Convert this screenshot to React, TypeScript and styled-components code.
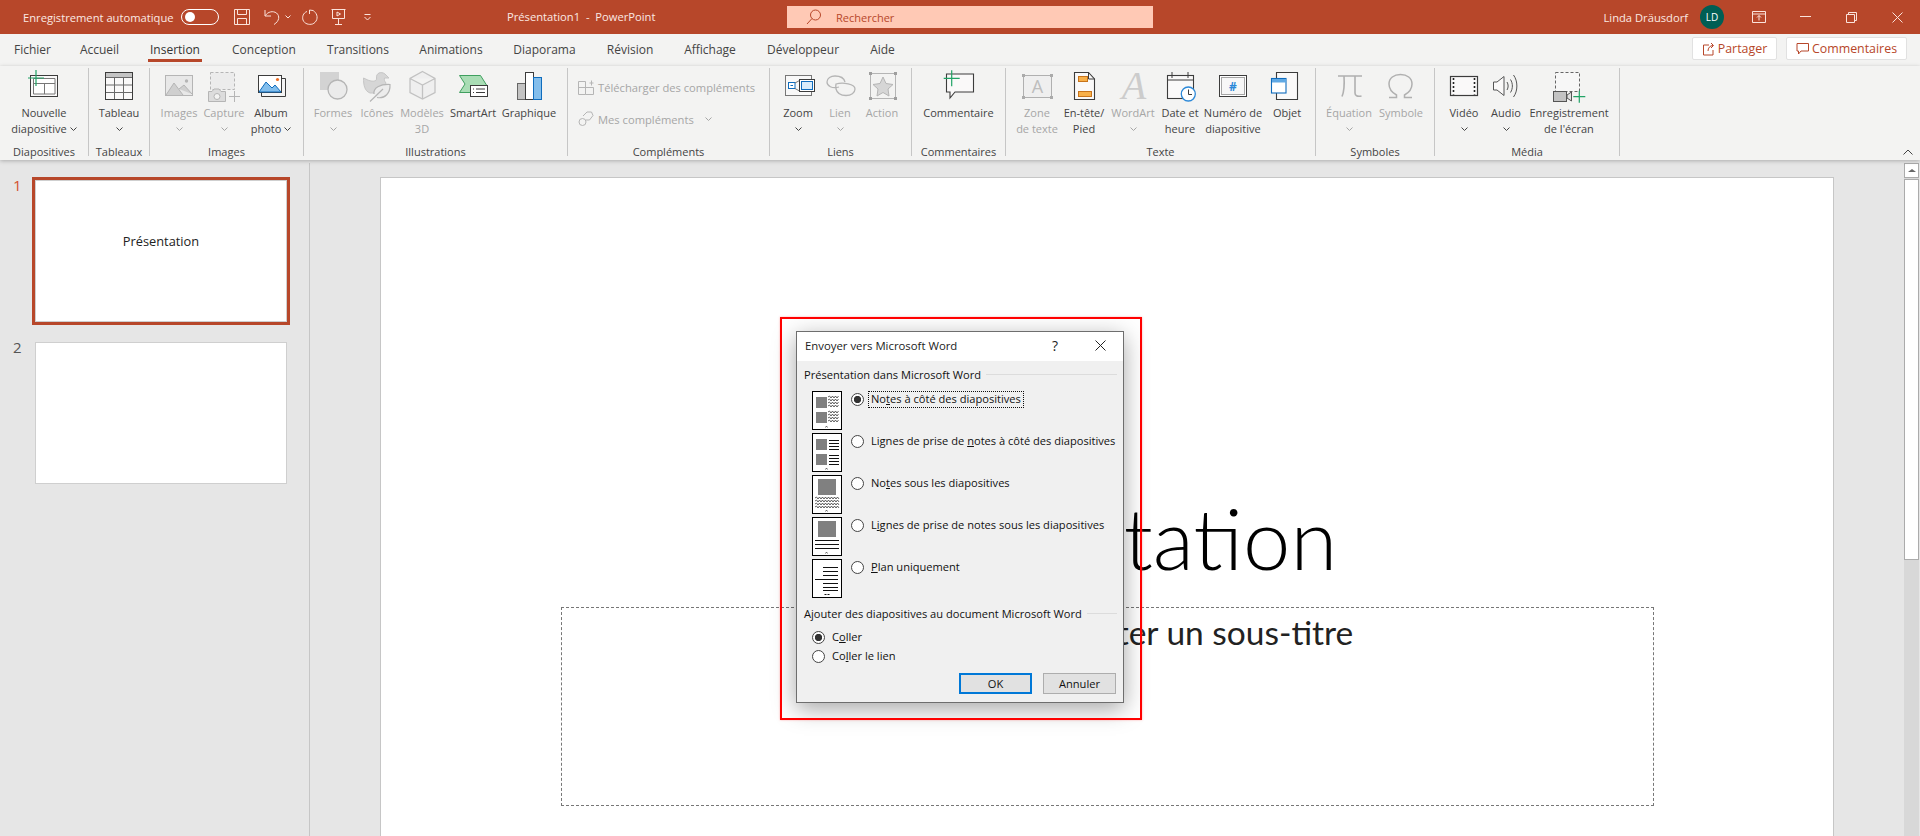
import React from 'react';
import styled, { createGlobalStyle } from 'styled-components';

const UI = '"Open Sans", "Noto Sans", "Liberation Sans", sans-serif';
const BRAND = '#B7472A';
const TEXT = '#444444';
const OFF = '#A6A6A6';
const GREEN = '#21A366';
const BLUE = '#0F6CBD';
const SKY = '#83BEEC';
const DARK = '#3C3C3C';
const GREY = '#B5B5B5';

const Global = createGlobalStyle`
  html, body { margin: 0; padding: 0; overflow: hidden; background: #E6E6E6; }
  #root { width: 1920px; height: 836px; }
  * { box-sizing: border-box; }
`;

const Page = styled.div`
  position: relative; width: 1920px; height: 836px; overflow: hidden;
  display: flex; flex-direction: column; font-family: ${UI}; font-size: 11px; color: ${TEXT};
`;

/* ---------- title bar ---------- */
const TitleBar = styled.header`
  height: 34px; flex: none; background: ${BRAND}; color: #fff; display: flex; align-items: center;
`;
const QuickAccess = styled.div`
  width: 507px; flex: none; display: flex; align-items: center; padding-left: 23px;
`;
const AutoSaveLabel = styled.span`
  width: 158px; font-size: 11.2px; white-space: nowrap; color: #FBE9E3;
`;
const Toggle = styled.span`
  width: 38px; height: 16px; border: 1.4px solid #fff; border-radius: 8px; display: flex; align-items: center; padding-left: 2.5px;
  &::before { content: ''; width: 10px; height: 10px; border-radius: 50%; background: #fff; }
`;
const QuickIcon = styled.svg<{ $ml: number }>`
  flex: none; margin-left: ${p => p.$ml}px; fill: none; stroke: #FBE3DB; stroke-width: 1;
`;
const DocTitle = styled.div`
  width: 280px; flex: none; font-size: 11.2px; color: #FBE9E3; white-space: pre; margin-top: -2px;
`;
const SearchBox = styled.div`
  width: 366px; height: 22px; flex: none; background: #FFC9B5; color: ${BRAND}; display: flex; align-items: center;
  padding-left: 19px; font-size: 11px; gap: 14px;
`;
const SearchIcon = styled.svg`
  fill: none; stroke: ${BRAND}; stroke-width: 1;
`;
const UserArea = styled.div`
  flex: 1; display: flex; justify-content: flex-end; align-items: center; gap: 12px; padding-right: 12px;
`;
const UserName = styled.span`
  font-size: 11.2px; color: #FBE9E3; white-space: nowrap;
`;
const Avatar = styled.span`
  width: 24px; height: 24px; border-radius: 50%; background: #005E54; color: #fff; font-size: 10px;
  display: flex; align-items: center; justify-content: center;
`;
const WinButton = styled.div`
  width: 46px; height: 34px; flex: none; display: flex; align-items: center; justify-content: center;
`;
const WinIcon = styled.svg`
  fill: none; stroke: #FBE3DB; stroke-width: 1;
`;

/* ---------- tabs ---------- */
const TabRow = styled.nav`
  height: 32px; flex: none; background: #F3F3F2; display: flex; align-items: flex-start; padding-left: 14px;
`;
const Tab = styled.div<{ $w: number; $active?: boolean }>`
  width: ${p => p.$w}px; margin-right: 29px; height: 28px; flex: none; display: flex; justify-content: center;
  padding-top: 6px; line-height: 20px; font-size: 12px; white-space: nowrap; color: ${p => (p.$active ? '#333' : TEXT)};
  border-bottom: 3px solid ${p => (p.$active ? BRAND : 'transparent')};
`;
const TabActions = styled.div`
  margin-left: auto; display: flex; gap: 9px; padding: 3px 13px 0 0;
`;
const ActionButton = styled.div<{ $w: number }>`
  width: ${p => p.$w}px; height: 23px; background: #fff; border: 1px solid #E1E1E1; border-radius: 2px; color: ${BRAND};
  display: flex; align-items: center; justify-content: center; gap: 3px; font-size: 12.4px; white-space: nowrap;
`;
const ActionIcon = styled.svg`
  fill: none; stroke: ${BRAND}; stroke-width: 1; flex: none;
`;

/* ---------- ribbon ---------- */
const Ribbon = styled.section`
  position: relative; z-index: 2; height: 94px; flex: none; background: #F3F3F2; display: flex; align-items: flex-start; padding-top: 2px;
  box-shadow: 0 1px 4px rgba(0, 0, 0, 0.25);
`;
const Group = styled.div<{ $w: number }>`
  width: ${p => p.$w}px; flex: none; display: flex; flex-direction: column;
`;
const GroupBody = styled.div<{ $pad?: number }>`
  height: 76px; display: flex; padding-left: ${p => p.$pad ?? 0}px;
`;
const GroupLabel = styled.div`
  height: 16px; line-height: 16px; text-align: center; font-size: 11px; white-space: nowrap; color: ${TEXT};
`;
const Separator = styled.div`
  width: 1px; height: 88px; flex: none; background: #C6C6C6;
`;
const RibbonButton = styled.div<{ $w: number; $off?: boolean }>`
  width: ${p => p.$w}px; flex: none; display: flex; flex-direction: column; align-items: center;
  color: ${p => (p.$off ? OFF : TEXT)};
`;
const IconSvg = styled.svg`
  flex: none; display: block; margin-bottom: 1px; overflow: visible;
`;
const Line = styled.span`
  height: 16px; line-height: 16px; font-size: 11px; white-space: nowrap; display: flex; align-items: center; gap: 3px;
`;
const Chevron = styled.svg<{ $off?: boolean; $ml?: number }>`
  flex: none; margin-left: ${p => p.$ml ?? 0}px; fill: none; stroke: ${p => (p.$off ? OFF : TEXT)}; stroke-width: 1;
`;
const AddinColumn = styled.div`
  display: flex; flex-direction: column; padding: 3px 0 0 10px; color: ${OFF};
`;
const AddinRow = styled.div`
  height: 32px; display: flex; align-items: center; font-size: 11.2px; white-space: nowrap; gap: 4px;
`;
const CollapseButton = styled.svg`
  margin: 0 7px 5px auto; align-self: flex-end; fill: none; stroke: ${TEXT}; stroke-width: 1;
`;

/* ---------- workspace ---------- */
const Workspace = styled.main`
  flex: 1; min-height: 0; display: flex; background: #E6E6E6;
`;
const ThumbPanel = styled.aside`
  width: 310px; margin-top: 3px; flex: none; border-right: 1px solid #C6C6C6; padding: 14px 0 0 13px;
  display: flex; flex-direction: column; gap: 14px;
`;
const ThumbRow = styled.div`
  display: flex;
`;
const ThumbNumber = styled.span<{ $active?: boolean }>`
  width: 19px; flex: none; font-size: 15px; line-height: 16px; color: ${p => (p.$active ? '#D35230' : '#555')};
`;
const Thumb = styled.div<{ $active?: boolean }>`
  width: 258px; height: 148px; border: 3px solid ${p => (p.$active ? BRAND : 'transparent')};
  display: flex; align-items: center; justify-content: center;
`;
const ThumbInner = styled.div`
  width: 100%; height: 100%; background: #fff; border: 1px solid #CFCFCF; display: flex; align-items: center; justify-content: center;
  padding-bottom: 20px; font-family: ${UI}; font-weight: 400; font-size: 12.8px; color: #222;
`;
const SlideArea = styled.div`
  flex: 1; min-width: 0; padding: 17px 0 0 70px; overflow: hidden;
`;
const Slide = styled.div`
  width: 1454px; height: 700px; background: #fff; border: 1px solid #C6C6C6; display: flex; flex-direction: column; align-items: center;
`;
const TitleZone = styled.div`
  height: 429px; flex: none; display: flex; align-items: flex-end; justify-content: center; padding-bottom: 20px;
`;
const SlideTitle = styled.div`
  font-family: Lato, "Open Sans", sans-serif; font-weight: 300; font-size: 85px; line-height: 100px; color: #000; white-space: nowrap;
`;
const SubtitleBox = styled.div`
  width: 1093px; height: 199px; flex: none; border: 1px dashed #777; display: flex; justify-content: center; padding-top: 6px;
`;
const SubtitleText = styled.div`
  font-family: Lato, "Open Sans", sans-serif; font-size: 33.5px; line-height: 36px; color: #222; white-space: nowrap;
`;
const Scrollbar = styled.div`
  width: 15px; flex: none; margin: 3px 1px 0 0; background: #D8D8D8; display: flex; flex-direction: column; gap: 1px;
`;
const ScrollUp = styled.div`
  height: 15px; background: #fff; border: 1px solid #ABABAB; display: flex; align-items: center; justify-content: center;
  &::before { content: ''; border: 4px solid transparent; border-top: 0; border-bottom: 3px solid #666; }
`;
const ScrollThumb = styled.div`
  height: 381px; background: #fff; border: 1px solid #ABABAB;
`;

/* ---------- dialog ---------- */
const Marker = styled.div`
  position: absolute; left: 780px; top: 317px; width: 362px; height: 403px; border: 2.5px solid #F00;
  box-shadow: 0 0 2px rgba(255, 120, 120, 0.6); z-index: 5; pointer-events: none;
`;
const Dialog = styled.div`
  position: absolute; left: 796px; top: 331px; width: 328px; height: 372px; z-index: 4; background: #F0F0F0;
  border: 1px solid #6E6E6E; box-shadow: 0 6px 22px rgba(0, 0, 0, 0.35); display: flex; flex-direction: column;
  font-size: 11.1px; color: #111; font-family: ${UI};
`;
const DialogHead = styled.div`
  height: 29px; flex: none; background: #fff; display: flex; align-items: center; padding: 0 0 2px 8px;
  font-size: 11.35px; color: #222;
`;
const DialogTitle = styled.span`
  flex: 1;
`;
const HelpMark = styled.span`
  width: 34px; font-size: 14px; text-align: center; margin-right: 23px;
`;
const CloseMark = styled.svg`
  margin-right: 17px; stroke: #222; fill: none;
`;
const DialogBody = styled.div`
  flex: 1; padding: 5px 6px 0 7px; display: flex; flex-direction: column;
`;
const Legend = styled.div<{ $mt?: number }>`
  height: 16px; margin-top: ${p => p.$mt ?? 0}px; display: flex; align-items: center; gap: 5px; white-space: nowrap;
  &::after { content: ''; flex: 1; height: 1px; background: #DCDCDC; }
`;
const OptionList = styled.div`
  margin: 9px 0 0 8px; display: flex; flex-direction: column; gap: 3px;
`;
const OptionRow = styled.div`
  height: 39px; display: flex; align-items: flex-start; gap: 9px;
`;
const DiagramSvg = styled.svg`
  flex: none; display: block;
`;
const RadioGroup = styled.div`
  display: flex; align-items: center; gap: 5px; padding-top: 1px; height: 15px;
`;
const Radio = styled.span<{ $on?: boolean }>`
  width: 13px; height: 13px; border-radius: 50%; flex: none; border: 1px solid #444; background: ${p =>
    p.$on ? 'radial-gradient(circle, #333 0 3.4px, #fff 3.9px)' : '#fff'};
`;
const RadioText = styled.span<{ $focus?: boolean }>`
  padding: 0 2px; height: 15px; line-height: 14px; white-space: nowrap;
  outline: ${p => (p.$focus ? '1px dotted #111' : 'none')};
`;
const PasteList = styled.div`
  margin: 9px 0 0 8px; display: flex; flex-direction: column; gap: 5px;
`;
const PasteRow = styled.div`
  height: 14px; display: flex; align-items: center; gap: 5px;
`;
const DialogFooter = styled.div`
  margin-top: 10px; display: flex; justify-content: flex-end; gap: 11px; padding-right: 1px;
`;
const DialogButton = styled.div<{ $primary?: boolean }>`
  width: 73px; height: 21px; display: flex; align-items: center; justify-content: center; background: #E1E1E1; white-space: nowrap;
  border: ${p => (p.$primary ? '2px solid #0078D7' : '1px solid #ADADAD')};
`;

/* ---------- icons ---------- */
const Plus = ({ x, y, r = 8 }: { x: number; y: number; r?: number }) => (
  <path d={`M${x - r} ${y}H${x + r}M${x} ${y - r}V${y + r}`} stroke={GREEN} strokeWidth="1.2" fill="none" />
);

const ic = {
  slide: (
    <>
      <rect x="6.5" y="7.5" width="27" height="21" fill="#FAF9F9" stroke={DARK} />
      <path d="M9.5 26V10.5H31V26H9.5M9.5 15.5H31M20.5 15.5V26" fill="#fff" stroke="#777" />
      <Plus x={12} y={10} />
    </>
  ),
  table: (
    <>
      <rect x="6.5" y="4.5" width="27" height="27" fill="#FAF9F9" stroke={DARK} />
      <rect x="7" y="5" width="26" height="4" fill="#C4C4C4" />
      <path d="M7 9.5H33M7 17H33M7 24.5H33M15.5 9V31M24.5 9V31" stroke="#6A6A6A" fill="none" />
    </>
  ),
  images: (
    <>
      <rect x="6.5" y="7.5" width="27" height="20" fill="#E8E8E8" stroke={GREY} />
      <path d="M7 27L15 15L24 27M20 21L25 17L33 26" fill="#CFCFCF" stroke={GREY} />
      <circle cx="27.5" cy="13" r="1.7" fill={GREY} />
    </>
  ),
  capture: (
    <>
      <rect x="6.5" y="4.5" width="24" height="17" fill="#ECECEC" stroke={GREY} strokeDasharray="3 2" />
      <path d="M4.5 23.5H8L10 21H15L17 23.5H21.5V33.5H4.5Z" fill="#DCDCDC" stroke={GREY} />
      <circle cx="13" cy="28.5" r="3" fill="#F3F3F2" stroke={GREY} />
      <path d="M25 28.5H36M30.5 23V34" stroke={GREY} fill="none" />
    </>
  ),
  album: (
    <>
      <path d="M10.5 25V28.5H34.5V10.5H31" fill="#F4F4F4" stroke={DARK} />
      <rect x="7.5" y="7.5" width="23" height="17" fill="#fff" stroke={DARK} />
      <path d="M8 24L15 14L21 20L24 17L30 24Z" fill={SKY} stroke={BLUE} />
      <circle cx="26.5" cy="11.5" r="1.6" fill="#ED6C23" />
    </>
  ),
  shapes: (
    <>
      <rect x="7" y="4" width="19" height="18" fill="#D3D3D3" />
      <circle cx="24.5" cy="21.5" r="9.5" fill="#EBEBEB" stroke={GREY} strokeWidth="1.3" />
    </>
  ),
  duck: (
    <>
      <path d="M6.5 10C6.5 17 7.5 23 13 25H25L29 15C27.5 13 27 12 27.5 10H32L28 6C24 3 19 5 19.5 10C20 13 17 13.5 14 13C11 12.5 9 11 6.5 10Z" fill="#D6D6D6" stroke="#C6C6C6" />
      <path d="M17 26C16 20 23 16 33 16.5C33.5 25 28 31 20 29.5M13 33.5L26 21" fill="#ECECEC" stroke={GREY} strokeWidth="1.2" />
    </>
  ),
  cube: (
    <path d="M20.5 3.5L33 10.5V24.5L20.5 31L8 24.5V10.5ZM8 10.5L20.5 17L33 10.5M20.5 17V31" fill="#EFEFEF" stroke="#C2C2C2" strokeWidth="1.3" />
  ),
  smartart: (
    <>
      <path d="M6.5 7.5H27.5L33.5 17L30 24.5H6.5L12 16Z" fill="#A9DDB5" stroke="#3F9F5F" />
      <rect x="17.5" y="17.5" width="17" height="11" fill="#fff" stroke={DARK} />
      <path d="M20 21H21M23 21H32M20 24.5H21M23 24.5H32" stroke={DARK} fill="none" />
    </>
  ),
  chart: (
    <>
      <rect x="8.5" y="15.5" width="8" height="16" fill="#C3C3C3" stroke="#666" />
      <rect x="16.5" y="4.5" width="8" height="27" fill="#fff" stroke={DARK} />
      <rect x="24.5" y="9.5" width="8" height="22" fill={SKY} stroke={BLUE} />
    </>
  ),
  zoom: (
    <>
      <rect x="7.5" y="7.5" width="26" height="20" fill="#F8F8F8" stroke="#777" />
      <rect x="10.5" y="14.5" width="6.5" height="6" fill="#fff" stroke={BLUE} />
      <path d="M12.5 17.5H15" stroke={BLUE} />
      <path d="M17 15L21.5 12.5M17 20.5L21.5 23" stroke="#777" fill="none" />
      <rect x="21.5" y="11.5" width="15" height="12" fill="#fff" stroke={DARK} />
      <rect x="23.5" y="13.5" width="11" height="8" fill="#D9ECFB" stroke={BLUE} />
    </>
  ),
  link: (
    <g fill="none" stroke={GREY} strokeWidth="1.3">
      <path d="M19 19C12 21 7 18 7 14C7 10 11 8 15 8C20 8 24 10 25 14" />
      <path d="M16 16C23 14 35 16 35 21C35 25 31 27.5 26 27.5C21 27.5 17 25 16 21C15.5 18 16 16 16 16Z" />
    </g>
  ),
  action: (
    <>
      <rect x="8.5" y="5.5" width="25" height="25" fill="#F3F3F2" stroke={GREY} />
      <path d="M21 9L24 15.5L31 16.5L26 21L27 28L21 24.5L15 28L16 21L11 16.5L18 15.5Z" fill="#D6D6D6" stroke={GREY} />
      <path d="M7 4H10V7H7ZM32 4H35V7H32ZM7 29H10V32H7ZM32 29H35V32H32Z" fill="#9E9E9E" />
    </>
  ),
  comment: (
    <>
      <path d="M7.5 6H34.5V24H16L11 30V24H7.5Z" fill="#FAF9F9" stroke={DARK} strokeWidth="1.1" />
      <Plus x={12.7} y={10.3} />
    </>
  ),
  textbox: (
    <>
      <rect x="6.5" y="7.5" width="28" height="22" fill="#EFEFEF" stroke="#B0B0B0" />
      <path d="M5 6H8V9H5ZM33 6H36V9H33ZM5 28H8V31H5ZM33 28H36V31H33Z" fill="#ABABAB" />
      <text x="20.5" y="25" textAnchor="middle" fontFamily="Open Sans, sans-serif" fontSize="18" fill="#BDBDBD">A</text>
    </>
  ),
  header: (
    <>
      <path d="M10.5 4.5H24.5L30.5 11V31.5H10.5Z" fill="#FAF9F9" stroke={DARK} strokeWidth="1.1" />
      <path d="M24.5 4.5V11H30.5" fill="none" stroke={DARK} />
      <rect x="14.5" y="8.5" width="9" height="5" fill="#F8B049" stroke="#C8741B" />
      <rect x="14.5" y="23.5" width="13" height="5" fill="#F8B049" stroke="#C8741B" />
    </>
  ),
  wordart: (
    <text x="21" y="31" textAnchor="middle" fontFamily="Liberation Serif, serif" fontStyle="italic" fontSize="40" fill="#CCCCCC">A</text>
  ),
  date: (
    <>
      <rect x="7.5" y="7.5" width="26" height="23" fill="#FAF9F9" stroke={DARK} strokeWidth="1.1" />
      <path d="M7.5 12H33.5M12 4V10M28 4V10" stroke={DARK} fill="none" />
      <circle cx="28.3" cy="26" r="7" fill="#fff" stroke="#2B88D8" strokeWidth="1.3" />
      <path d="M28.5 21.5V26.5H32" stroke={DARK} fill="none" />
    </>
  ),
  number: (
    <>
      <rect x="6.5" y="7.5" width="27" height="21" fill="#fff" stroke={DARK} />
      <rect x="8.5" y="9.5" width="23" height="17" fill="#F7F7F7" stroke="#A6A6A6" />
      <text x="20" y="23" textAnchor="middle" fontFamily="Open Sans, sans-serif" fontWeight="700" fontSize="12" fill="#2B88D8">#</text>
    </>
  ),
  object: (
    <>
      <path d="M9.5 10V4.5H30.5V31.5H9.5V25" fill="#FAF9F9" stroke={DARK} strokeWidth="1.1" />
      <rect x="4.5" y="10.5" width="14.5" height="14.5" fill="#fff" stroke={BLUE} strokeWidth="1.1" />
      <rect x="5" y="11" width="14" height="3.5" fill="#5FA8E4" />
    </>
  ),
  pi: (
    <path d="M9 8H33M15 8C15.5 16 15 24 13 28.5M26 8V25C26 27.5 28 29 32.5 28" fill="none" stroke="#B0B0B0" strokeWidth="1.6" />
  ),
  omega: (
    <path d="M8 29.5H15.5V27C10 24 8 20 8 16C8 10 13 6.5 19.5 6.5C26 6.5 31 10 31 16C31 20 29 24 23.5 27V29.5H31" fill="none" stroke="#B0B0B0" strokeWidth="1.5" />
  ),
  video: (
    <>
      <rect x="6.5" y="8.5" width="27" height="19" fill="#FAF9F9" stroke={DARK} strokeWidth="1.2" />
      <path d="M9.5 10V26.5M30.5 10V26.5" stroke="#222" strokeWidth="1.6" strokeDasharray="2 2" fill="none" />
    </>
  ),
  audio: (
    <g fill="none" stroke="#555">
      <path d="M7.5 14H11L18 8.5V27.5L11 22H7.5Z" fill="#FAF9F9" />
      <path d="M21 14C22.5 16.5 22.5 19.5 21 22M24.5 11.5C27 15.5 27 20.5 24.5 24.5M27.5 7C32 13 32 23 27.5 29" />
    </g>
  ),
  record: (
    <>
      <rect x="6.5" y="4.5" width="24" height="19" fill="#F7F7F7" stroke="#666" strokeDasharray="3 2" />
      <rect x="4.5" y="23.5" width="13" height="10" fill="#C3C3C3" stroke="#555" />
      <path d="M18 27L22.5 24V33L18 30Z" fill="#E0E0E0" stroke="#555" />
      <Plus x={30.3} y={28.7} r={6} />
    </>
  ),
};

/* ---------- data ---------- */
type Btn = { lines: string[]; w: number; icon: React.ReactNode; off?: boolean; chev?: boolean };

const SmallChevron = ({ off, ml }: { off?: boolean; ml?: number }) => (
  <Chevron $off={off} $ml={ml} width="7" height="4" viewBox="0 0 7 4"><path d="M.5.5L3.5 3.5L6.5.5" /></Chevron>
);

const Tool = ({ lines, w, icon, off, chev }: Btn) => (
  <RibbonButton $w={w} $off={off}>
    <IconSvg width="40" height="36" viewBox="0 0 40 36">{icon}</IconSvg>
    <Line>{lines[0]}</Line>
    {lines[1] ? (
      <Line>
        {lines[1]}
        {chev && <SmallChevron off={off} />}
      </Line>
    ) : chev ? (
      <Line><SmallChevron off={off} /></Line>
    ) : null}
  </RibbonButton>
);

const tabs: [string, number, boolean?][] = [
  ['Fichier', 37], ['Accueil', 39], ['Insertion', 54, true], ['Conception', 66], ['Transitions', 64], ['Animations', 64],
  ['Diaporama', 65], ['Révision', 48], ['Affichage', 54], ['Développeur', 74], ['Aide', 27],
];

const groups: { label: string; w: number; pad?: number; btns?: Btn[] }[] = [
  { label: 'Diapositives', w: 88, btns: [{ lines: ['Nouvelle', 'diapositive'], w: 88, icon: ic.slide, chev: true }] },
  { label: 'Tableaux', w: 60, btns: [{ lines: ['Tableau'], w: 60, icon: ic.table, chev: true }] },
  { label: 'Images', w: 153, pad: 7, btns: [
    { lines: ['Images'], w: 44, icon: ic.images, off: true, chev: true },
    { lines: ['Capture'], w: 46, icon: ic.capture, off: true, chev: true },
    { lines: ['Album', 'photo'], w: 48, icon: ic.album, chev: true },
  ] },
  { label: 'Illustrations', w: 263, pad: 7, btns: [
    { lines: ['Formes'], w: 44, icon: ic.shapes, off: true, chev: true },
    { lines: ['Icônes'], w: 44, icon: ic.duck, off: true },
    { lines: ['Modèles', '3D'], w: 46, icon: ic.cube, off: true },
    { lines: ['SmartArt'], w: 56, icon: ic.smartart },
    { lines: ['Graphique'], w: 56, icon: ic.chart },
  ] },
  { label: 'Compléments', w: 201 },
  { label: 'Liens', w: 141, pad: 6, btns: [
    { lines: ['Zoom'], w: 44, icon: ic.zoom, chev: true },
    { lines: ['Lien'], w: 40, icon: ic.link, off: true, chev: true },
    { lines: ['Action'], w: 44, icon: ic.action, off: true },
  ] },
  { label: 'Commentaires', w: 93, btns: [{ lines: ['Commentaire'], w: 93, icon: ic.comment }] },
  { label: 'Texte', w: 309, pad: 8, btns: [
    { lines: ['Zone', 'de texte'], w: 46, icon: ic.textbox, off: true },
    { lines: ['En-tête/', 'Pied'], w: 48, icon: ic.header },
    { lines: ['WordArt'], w: 50, icon: ic.wordart, off: true, chev: true },
    { lines: ['Date et', 'heure'], w: 44, icon: ic.date },
    { lines: ['Numéro de', 'diapositive'], w: 62, icon: ic.number },
    { lines: ['Objet'], w: 46, icon: ic.object },
  ] },
  { label: 'Symboles', w: 118, pad: 7, btns: [
    { lines: ['Équation'], w: 52, icon: ic.pi, off: true, chev: true },
    { lines: ['Symbole'], w: 52, icon: ic.omega, off: true },
  ] },
  { label: 'Média', w: 184, pad: 7, btns: [
    { lines: ['Vidéo'], w: 44, icon: ic.video, chev: true },
    { lines: ['Audio'], w: 40, icon: ic.audio, chev: true },
    { lines: ['Enregistrement', "de l'écran"], w: 86, icon: ic.record },
  ] },
];

/* ---------- dialog diagrams ---------- */
const wave = (x0: number, x1: number, y: number) => {
  let d = `M${x0} ${y}`;
  let up = true;
  for (let x = x0 + 1.5; x <= x1; x += 1.5) {
    d += `L${x} ${y + (up ? -1 : 1)}`;
    up = !up;
  }
  return d;
};
const rules = (x0: number, x1: number, ys: number[]) => ys.map(y => `M${x0} ${y + 0.5}H${x1}`).join('');
const Tick = ({ y = 35 }: { y?: number }) => <path d={`M13.5 ${y + 1.5}L14.5 ${y}L15.5 ${y + 1.5}`} stroke="#333" strokeWidth="0.7" fill="none" />;

const Diagram = ({ kind }: { kind: number }) => (
  <DiagramSvg width="30" height="39" viewBox="0 0 30 39">
    <rect x="0.5" y="0.5" width="29" height="38" fill="#fff" stroke="#000" />
    {(kind === 0 || kind === 1) && (
      <>
        <rect x="4" y="6" width="11" height="11" fill="#808080" />
        <rect x="4" y="21" width="11" height="11" fill="#808080" />
      </>
    )}
    {kind === 0 && [6, 9, 12, 15, 21, 24, 27, 30].map(y => <path key={y} d={wave(16, 27, y)} stroke="#222" strokeWidth="0.7" fill="none" />)}
    {kind === 1 && <path d={rules(17, 27, [7, 10, 13, 16, 22, 25, 28, 31])} stroke="#111" fill="none" />}
    {(kind === 2 || kind === 3) && <rect x="6" y="4" width="18" height="16" fill="#808080" />}
    {kind === 2 && [23, 26, 29, 32].map(y => <path key={y} d={wave(3, 27, y)} stroke="#222" strokeWidth="0.7" fill="none" />)}
    {kind === 3 && <path d={rules(3, 27, [23, 27, 31])} stroke="#111" fill="none" />}
    {kind === 4 ? (
      <>
        <path d={rules(11, 26, [8, 12, 16])} stroke="#111" fill="none" />
        <path d={rules(3, 26, [20])} stroke="#111" fill="none" />
        <path d={rules(11, 26, [24, 28, 31])} stroke="#111" fill="none" />
        <path d="M12.5 35.5H14.5M15.5 35.5H17.5" stroke="#111" fill="none" />
      </>
    ) : (
      <Tick />
    )}
  </DiagramSvg>
);

const options: React.ReactNode[] = [
  <>No<u>t</u>es à côté des diapositives</>,
  <>Lignes de prise de <u>n</u>otes à côté des diapositives</>,
  <>No<u>t</u>es sous les diapositives</>,
  <>L<u>i</u>gnes de prise de notes sous les diapositives</>,
  <><u>P</u>lan uniquement</>,
];

export default function App() {
  return (
    <Page>
      <Global />
      <TitleBar>
        <QuickAccess>
          <AutoSaveLabel>Enregistrement automatique</AutoSaveLabel>
          <Toggle />
          <QuickIcon $ml={15} width="16" height="16" viewBox="0 0 16 16">
            <path d="M.5.5H15.5V15.5H.5ZM3.5.5V5.5H12.5V.5M3.5 15.5V9.5H12.5V15.5" />
          </QuickIcon>
          <QuickIcon $ml={14} width="16" height="16" viewBox="0 0 16 16">
            <path d="M1 1V7H7M1.3 6.6C4 2.6 9 1.6 12.5 4C16 7 15.5 12 10 15.5" />
          </QuickIcon>
          <QuickIcon $ml={5} width="6" height="4" viewBox="0 0 6 4"><path d="M.5.5L3 3L5.5.5" /></QuickIcon>
          <QuickIcon $ml={11} width="16" height="16" viewBox="0 0 16 16">
            <path d="M11 1.5L7.5 1V5M5 2.5C1 4 0 8 1 11C2.5 15 7 16 10.5 15C14.5 13.5 16.5 8.5 14 4.5C13 3 12 2 11 1.5" />
          </QuickIcon>
          <QuickIcon $ml={13} width="15" height="16" viewBox="0 0 15 16">
            <path d="M.5.5H14.5M1.5.5V9.5H13.5V.5M7.5 9.5V15.5M4 15.5H11M6 3L9.5 5L6 7Z" />
          </QuickIcon>
          <QuickIcon $ml={18} width="7" height="7" viewBox="0 0 7 7"><path d="M.5.5H6.5M.5 3L3.5 6L6.5 3" /></QuickIcon>
        </QuickAccess>
        <DocTitle>Présentation1  -  PowerPoint</DocTitle>
        <SearchBox>
          <SearchIcon width="16" height="16" viewBox="0 0 16 16">
            <circle cx="9.5" cy="6" r="5" />
            <path d="M6 9.5L1 15" />
          </SearchIcon>
          Rechercher
        </SearchBox>
        <UserArea>
          <UserName>Linda Dräusdorf</UserName>
          <Avatar>LD</Avatar>
        </UserArea>
        <WinButton>
          <WinIcon width="14" height="12" viewBox="0 0 14 12">
            <path d="M.5.5H13.5V11.5H.5ZM.5 3H13.5M7 9.5V4.5M5 6.5L7 4.5L9 6.5" />
          </WinIcon>
        </WinButton>
        <WinButton>
          <WinIcon width="11" height="2" viewBox="0 0 11 2"><path d="M0 .5H11" /></WinIcon>
        </WinButton>
        <WinButton>
          <WinIcon width="11" height="11" viewBox="0 0 11 11">
            <path d="M.5 2.5H8.5V10.5H.5ZM2.5 2.5V.5H10.5V8.5H8.5" />
          </WinIcon>
        </WinButton>
        <WinButton>
          <WinIcon width="11" height="11" viewBox="0 0 11 11"><path d="M.5.5L10.5 10.5M10.5.5L.5 10.5" /></WinIcon>
        </WinButton>
      </TitleBar>

      <TabRow>
        {tabs.map(([name, w, active]) => (
          <Tab key={name} $w={w} $active={active}>{name}</Tab>
        ))}
        <TabActions>
          <ActionButton $w={85}>
            <ActionIcon width="13" height="14" viewBox="0 0 13 14">
              <path d="M7 3H1.5V13H11V8M6 9C6 6 8 3.5 11 3.5M9 1L11.5 3.5L9 6" />
            </ActionIcon>
            Partager
          </ActionButton>
          <ActionButton $w={121}>
            <ActionIcon width="13" height="13" viewBox="0 0 13 13">
              <path d="M1 1.5H12.5V9H5L2.5 12V9H1Z" />
            </ActionIcon>
            Commentaires
          </ActionButton>
        </TabActions>
      </TabRow>

      <Ribbon>
        {groups.map(g => (
          <React.Fragment key={g.label}>
            <Group $w={g.w}>
              <GroupBody $pad={g.pad}>
                {g.btns ? (
                  g.btns.map(b => <Tool key={b.lines[0]} {...b} />)
                ) : (
                  <AddinColumn>
                    <AddinRow>
                      <svg width="16" height="16" viewBox="0 0 16 16" fill="none" stroke={GREY}>
                        <path d="M.5 2.5H7.5V15.5H.5ZM7.5 8.5H.5M7.5 8.5H15.5V15.5H7.5M11.5 4H15.5M13.5 1.5V6.5" />
                      </svg>
                      Télécharger des compléments
                    </AddinRow>
                    <AddinRow>
                      <svg width="16" height="16" viewBox="0 0 16 16" fill="none" stroke={GREY}>
                        <path d="M5 5L9 1H13.5L15 4.5L11.5 9H8" />
                        <circle cx="4.5" cy="11" r="3.5" />
                      </svg>
                      Mes compléments
                      <SmallChevron off ml={7} />
                    </AddinRow>
                  </AddinColumn>
                )}
              </GroupBody>
              <GroupLabel>{g.label}</GroupLabel>
            </Group>
            <Separator />
          </React.Fragment>
        ))}
        <CollapseButton width="10" height="6" viewBox="0 0 10 6"><path d="M.5 5.5L5 1L9.5 5.5" /></CollapseButton>
      </Ribbon>

      <Workspace>
        <ThumbPanel>
          <ThumbRow>
            <ThumbNumber $active>1</ThumbNumber>
            <Thumb $active><ThumbInner>Présentation</ThumbInner></Thumb>
          </ThumbRow>
          <ThumbRow>
            <ThumbNumber>2</ThumbNumber>
            <Thumb><ThumbInner /></Thumb>
          </ThumbRow>
        </ThumbPanel>
        <SlideArea>
          <Slide>
            <TitleZone><SlideTitle>Présentation</SlideTitle></TitleZone>
            <SubtitleBox><SubtitleText>Cliquez pour ajouter un sous-titre</SubtitleText></SubtitleBox>
          </Slide>
        </SlideArea>
        <Scrollbar>
          <ScrollUp />
          <ScrollThumb />
        </Scrollbar>
      </Workspace>

      <Dialog>
        <DialogHead>
          <DialogTitle>Envoyer vers Microsoft Word</DialogTitle>
          <HelpMark>?</HelpMark>
          <CloseMark width="11" height="11" viewBox="0 0 11 11"><path d="M.5.5L10.5 10.5M10.5.5L.5 10.5" /></CloseMark>
        </DialogHead>
        <DialogBody>
          <Legend>Présentation dans Microsoft Word</Legend>
          <OptionList>
            {options.map((o, i) => (
              <OptionRow key={i}>
                <Diagram kind={i} />
                <RadioGroup>
                  <Radio $on={i === 0} />
                  <RadioText $focus={i === 0}>{o}</RadioText>
                </RadioGroup>
              </OptionRow>
            ))}
          </OptionList>
          <Legend $mt={7}>Ajouter des diapositives au document Microsoft Word</Legend>
          <PasteList>
            <PasteRow><Radio $on /><RadioText>C<u>o</u>ller</RadioText></PasteRow>
            <PasteRow><Radio /><RadioText>Co<u>l</u>ler le lien</RadioText></PasteRow>
          </PasteList>
          <DialogFooter>
            <DialogButton $primary>OK</DialogButton>
            <DialogButton>Annuler</DialogButton>
          </DialogFooter>
        </DialogBody>
      </Dialog>
      <Marker />
    </Page>
  );
}
